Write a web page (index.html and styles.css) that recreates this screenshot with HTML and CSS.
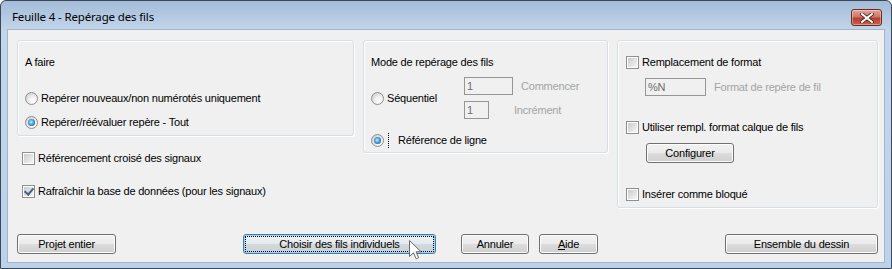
FILE: index.html
```html
<!DOCTYPE html>
<html lang="fr">
<head>
  <meta charset="UTF-8" />
  <title>Feuille 4 - Repérage des fils</title>
  <link rel="stylesheet" href="styles.css">
</head>
<body>
  <div class="window">
    <div class="titlebar">
      <span class="title">Feuille 4 - Repérage des fils</span>
      <span class="close">
        <svg width="14" height="10" viewBox="0 0 14 10">
          <path d="M2 1 L12 9 M12 1 L2 9" stroke="#4a1d18" stroke-width="3.6" stroke-linecap="square"/>
          <path d="M2 1 L12 9 M12 1 L2 9" stroke="#ffffff" stroke-width="2" stroke-linecap="square"/>
        </svg>
      </span>
    </div>

    <div class="client">
      <div class="top">
        <div class="col-left">
          <div class="group group-todo">
            <div class="caption">A faire</div>
            <div class="opt first"><span class="radio"></span>Repérer nouveaux/non numérotés uniquement</div>
            <div class="opt second"><span class="radio checked"></span>Repérer/réévaluer repère - Tout</div>
          </div>
          <div class="opt xref"><span class="check"></span>Référencement croisé des signaux</div>
          <div class="opt refresh"><span class="check checked"></span>Rafraîchir la base de données (pour les signaux)</div>
        </div>

        <div class="group group-mode">
          <div class="caption">Mode de repérage des fils</div>
          <div class="seq-row">
            <div class="opt seq"><span class="radio"></span>Séquentiel</div>
            <div class="fields">
              <div class="field-row">
                <span class="textbox wide">1</span>
                <span class="hint start">Commencer</span>
              </div>
              <div class="field-row">
                <span class="textbox narrow">1</span>
                <span class="hint step">Incrément</span>
              </div>
            </div>
          </div>
          <div class="opt line-ref"><span class="radio checked"></span><span class="focused">Référence de ligne</span></div>
        </div>

        <div class="group group-format">
          <div class="opt"><span class="check"></span>Remplacement de format</div>
          <div class="field-row format-row">
            <span class="textbox format">%N</span>
            <span class="hint fmt">Format de repère de fil</span>
          </div>
          <div class="opt layer"><span class="check"></span>Utiliser rempl. format calque de fils</div>
          <button class="btn configure">Configurer</button>
          <div class="opt locked"><span class="check"></span>Insérer comme bloqué</div>
        </div>
      </div>

      <div class="actions">
        <button class="btn project">Projet entier</button>
        <button class="btn choose">Choisir des fils individuels</button>
        <button class="btn cancel">Annuler</button>
        <button class="btn help"><u>A</u>ide</button>
        <button class="btn drawing">Ensemble du dessin</button>
      </div>
    </div>

    <svg class="cursor" width="13" height="20" viewBox="0 0 13 20">
      <path d="M0.5 0.5 L0.5 16.5 L4.5 12.8 L7.2 18.8 L9.6 17.7 L7 11.8 L12 11.8 Z" fill="#ffffff" stroke="#6b6b6b" stroke-width="1"/>
    </svg>
  </div>
</body>
</html>
```

FILE: styles.css
```css
body {
  margin: 0;
  background-color: #ffffff;
  font-family: 'Liberation Sans', Arial, sans-serif;
  font-size: 11px;
  letter-spacing: -0.2px;
  color: #000;
}
.window {
  position: relative;
  width: 892px;
  height: 269px;
  box-sizing: border-box;
  border: 1px solid #3b4857;
  border-radius: 6px 6px 0 0;
  background: linear-gradient(#a4bcd9, #c3d6eb 30px, #bcd2ea);
  display: flex;
  flex-direction: column;
}
.titlebar {
  height: 29px;
  display: flex;
  align-items: center;
  padding: 0 9px 0 11px;
  box-sizing: border-box;
}
.title {
  font-family: 'Noto Sans', 'Open Sans', sans-serif;
  font-size: 11.5px;
  letter-spacing: -0.15px;
  color: #000;
  flex: 1;
  padding-top: 1px;
}
.close {
  width: 31px;
  height: 17px;
  box-sizing: border-box;
  margin-top: 4px;
  border: 1px solid #6e2b24;
  border-radius: 3px;
  background: linear-gradient(#e2a59b, #cf7567 45%, #b5402f 55%, #c9624f);
  box-shadow: inset 0 0 0 1px rgba(255,255,255,0.35);
  display: flex;
  align-items: center;
  justify-content: center;
}
.client {
  margin: 0 7px 6px 7px;
  flex: 1;
  background-color: #f0f0f0;
  box-shadow: 0 0 0 1px #a3b5cb;
  padding: 10px 6px 8px 9px;
  display: flex;
  flex-direction: column;
}
.top {
  display: flex;
  align-items: flex-start;
  gap: 9px;
}
.group {
  box-sizing: border-box;
  border: 1px solid #d5dfe5;
  border-radius: 3px;
  box-shadow: inset 1px 1px 0 #ffffff, 1px 1px 0 #ffffff;
  padding: 15px 0 0 7px;
}
.col-left {
  width: 337px;
}
.group-todo {
  height: 96px;
}
.group-mode {
  width: 245px;
  height: 113px;
}
.group-format {
  width: 261px;
  height: 168px;
  padding-left: 8px;
}
.caption {
  height: 13px;
  line-height: 13px;
}
.opt {
  display: flex;
  align-items: center;
  height: 13px;
  line-height: 13px;
  white-space: nowrap;
}
.opt.first {
  margin-top: 23px;
}
.opt.second {
  margin-top: 11px;
}
.opt.xref {
  margin: 16px 0 0 5px;
}
.opt.refresh {
  margin: 20px 0 0 5px;
}
.radio {
  position: relative;
  width: 13px;
  height: 13px;
  box-sizing: border-box;
  border-radius: 50%;
  border: 1px solid #8d8f92;
  background: radial-gradient(circle at 65% 70%, #ffffff 0, #f2f2f2 35%, #d2d2d2 80%);
  margin-right: 3px;
  flex: none;
}
.radio.checked::after {
  content: "";
  position: absolute;
  left: 2px;
  top: 2px;
  width: 7px;
  height: 7px;
  border-radius: 50%;
  background: radial-gradient(circle at 45% 45%, #c8ecff 0, #5fb5ea 35%, #1c62a8 75%, #0f3f73 100%);
}
.check {
  width: 13px;
  height: 13px;
  box-sizing: border-box;
  border: 1px solid #8e8f8f;
  padding: 1px;
  background: linear-gradient(135deg, #cbcbcb, #f5f5f5) content-box, #ffffff;
  margin-right: 3px;
  flex: none;
  display: flex;
  align-items: center;
  justify-content: center;
}
.check.checked::after {
  content: "";
  width: 4px;
  height: 7px;
  margin-top: -2px;
  border: solid #4b5f8c;
  border-width: 0 2px 2px 0;
  transform: rotate(40deg);
}
.seq-row {
  display: flex;
  align-items: center;
  margin-top: 8px;
}
.opt.seq {
  width: 93px;
}
.fields {
  display: flex;
  flex-direction: column;
  gap: 6px;
}
.field-row {
  display: flex;
  align-items: center;
}
.textbox {
  height: 18px;
  box-sizing: border-box;
  border: 1px solid #969696;
  background-color: #f0f0f0;
  color: #6d6d6d;
  line-height: 16px;
  padding-left: 2px;
}
.textbox.wide {
  width: 49px;
}
.textbox.narrow {
  width: 25px;
}
.textbox.format {
  width: 61px;
}
.hint {
  color: #a3a3a3;
}
.hint.start {
  margin-left: 8px;
}
.hint.step {
  margin-left: 25px;
}
.hint.fmt {
  margin-left: 8px;
}
.opt.line-ref {
  margin-top: 15px;
}
.focused {
  border-left: 1px dotted #000;
  padding-left: 9px;
  margin-left: 1px;
  height: 15px;
  line-height: 15px;
}
.format-row {
  margin: 9px 0 0 19px;
}
.opt.layer {
  margin-top: 25px;
}
.opt.locked {
  margin-top: 25px;
}
.btn {
  height: 20px;
  box-sizing: border-box;
  border: 1px solid #707070;
  border-radius: 3px;
  background: linear-gradient(#f2f2f2, #ebebeb 50%, #dddddd 50%, #cfcfcf);
  box-shadow: inset 0 0 0 1px #fcfcfc;
  font-family: 'Liberation Sans', Arial, sans-serif;
  font-size: 11px;
  letter-spacing: -0.2px;
  color: #000;
  padding: 0;
  display: block;
}
.btn.configure {
  width: 88px;
  margin: 9px 0 0 20px;
}
.actions {
  margin-top: auto;
  display: flex;
}
.btn.project {
  width: 99px;
}
.btn.choose {
  width: 193px;
  margin-left: 127px;
  border-color: #3c7fb1;
  box-shadow: inset 0 0 0 1px #9fd3f5;
  background: linear-gradient(#eef3f6, #e3e9ed 50%, #d3dadf 50%, #c9d1d7);
  outline: 1px dotted #000;
  outline-offset: -3px;
}
.btn.cancel {
  width: 68px;
  margin-left: 25px;
}
.btn.help {
  width: 59px;
  margin-left: 10px;
}
.btn.drawing {
  width: 153px;
  margin-left: auto;
}
.cursor {
  position: absolute;
  left: 408px;
  top: 239px;
}
```
